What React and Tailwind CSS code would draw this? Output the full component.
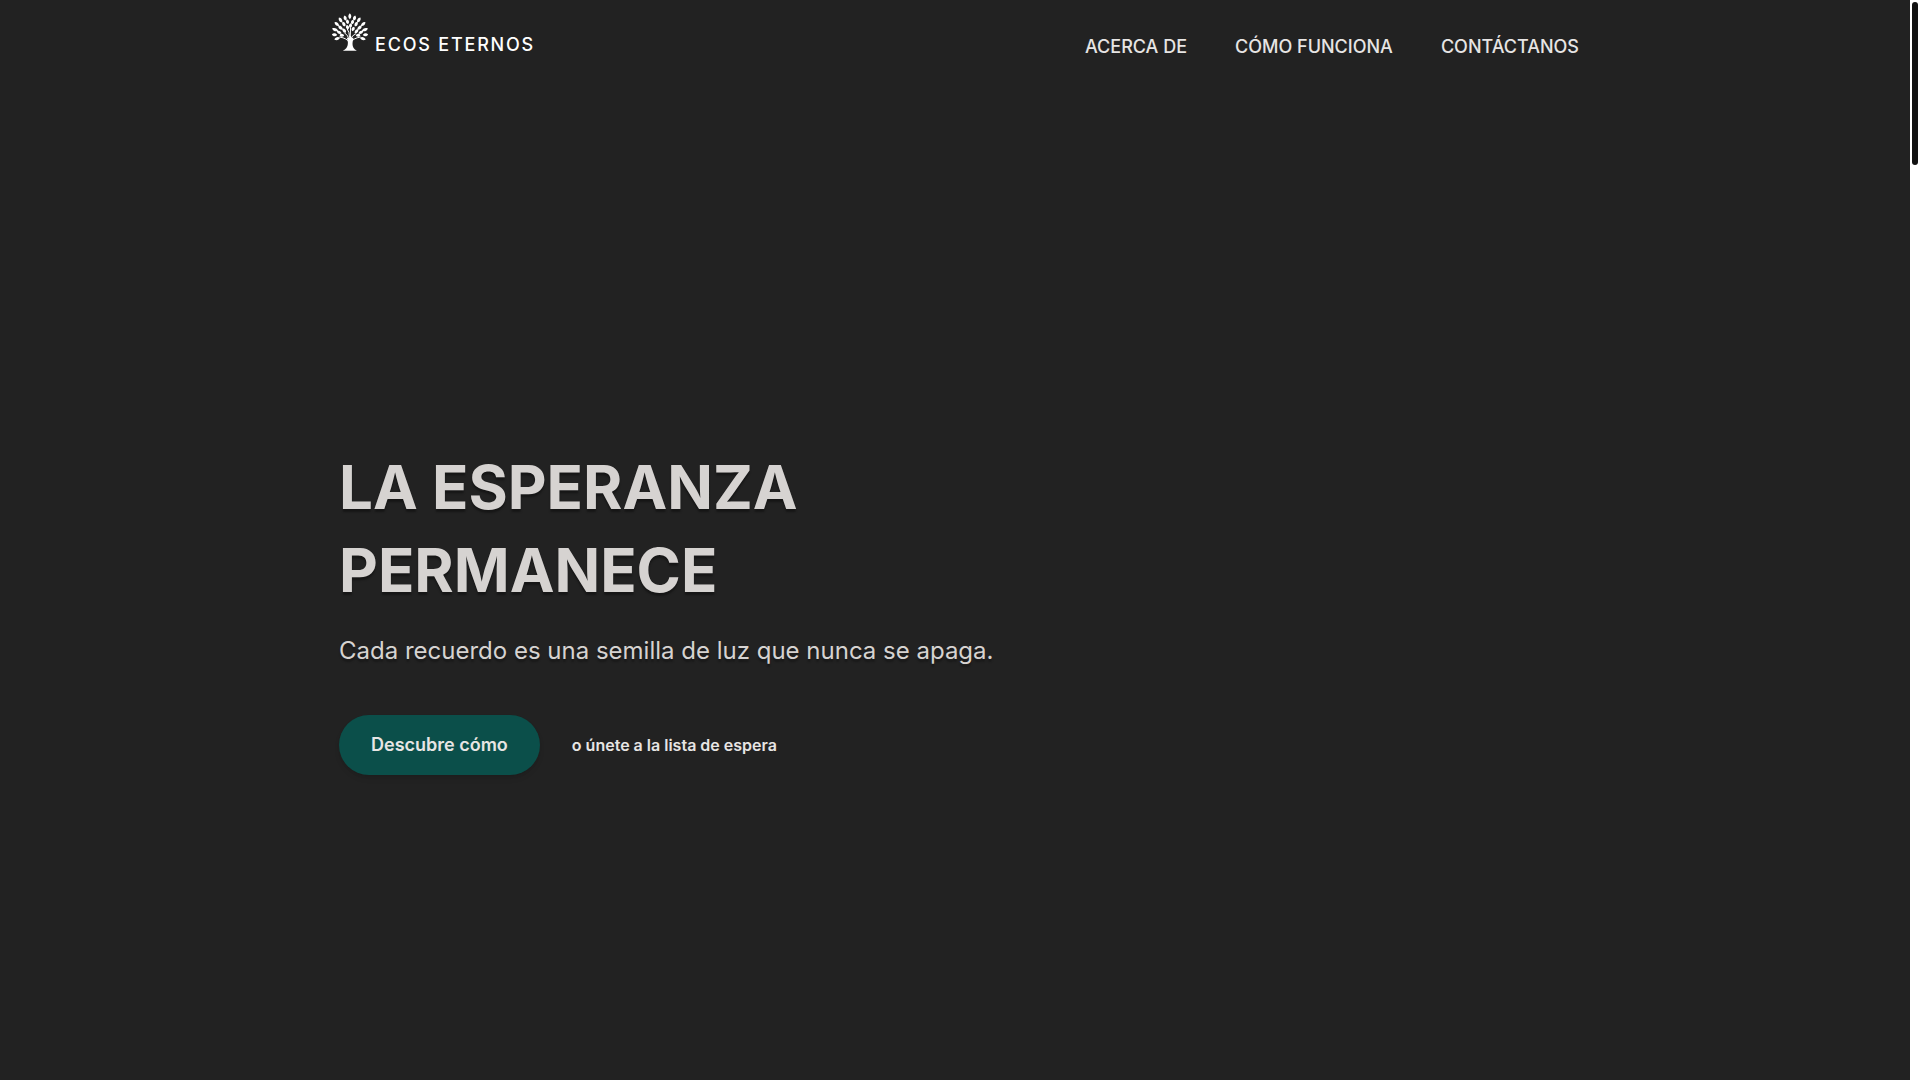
const leaves = [
  [74, 31, 0, 9],
  [60, 36, -14, 8],
  [88, 36, 14, 8],
  [46, 42, -32, 9],
  [101, 42, 32, 9],
  [35, 54, -48, 9],
  [114, 54, 48, 9],
  [30, 71, -68, 10],
  [119, 71, 68, 10],
  [28, 86, -84, 8],
  [121, 86, 84, 8],
  [36, 98, -108, 9],
  [113, 98, 108, 9],
  [67, 47, -12, 7],
  [82, 48, 14, 7],
  [56, 54, -28, 8],
  [93, 54, 28, 8],
  [46, 65, -48, 9],
  [103, 65, 48, 9],
  [42, 79, -62, 8],
  [107, 79, 62, 8],
  [50, 88, -80, 7],
  [99, 88, 80, 7],
  [67, 64, -16, 7],
  [84, 69, 24, 7],
  [57, 74, -40, 8],
  [94, 76, 42, 8],
  [76, 59, 6, 7],
];

function TreeLogo() {
  return (
    <svg viewBox="18 21 113 114" className="h-[38px] w-[38px]" fill="white" aria-hidden="true">
      {leaves.map(([x, y, angle, length]) => (
        <path
          key={`${x}-${y}`}
          d={`M0 ${-length} C6 -4 6 4 0 ${length} C-6 4 -6 -4 0 ${-length}Z`}
          transform={`translate(${x} ${y}) rotate(${angle})`}
        />
      ))}
      <g fill="none" stroke="white" strokeWidth="3" strokeLinecap="round">
        <path d="M70 107 Q66 97 44 93" />
        <path d="M79 107 Q84 97 105 93" />
        <path d="M72 102 Q70 88 58 80" />
        <path d="M75 105 L76 66" />
        <path d="M77 100 Q79 88 92 83" />
        <path d="M73 92 Q73 78 67 70" />
      </g>
      <path d="M65 95 Q73 98 74 90 L77 90 Q78 98 85 95 Q82 104 82 114 Q82 128 95 134 L53 134 Q67 128 68 114 Q69 102 65 95Z" />
    </svg>
  );
}

const links = [
  ["ACERCA DE", "#acerca"],
  ["CÓMO FUNCIONA", "#como"],
  ["CONTÁCTANOS", "#contacto"],
];

export default function App() {
  return (
    <div className="flex h-screen bg-[#222222] font-['Inter',sans-serif] text-stone-200">
      <div className="flex min-w-0 flex-1 flex-col">
        <header className="mx-auto flex w-full max-w-7xl items-start justify-between px-4 pt-[13px]">
          <a href="#inicio" className="flex items-baseline gap-1.5 text-white">
            <TreeLogo />
            <span className="text-lg leading-7 font-medium tracking-widest">ECOS ETERNOS</span>
          </a>
          <nav className="flex gap-12 pt-5 text-lg leading-7 font-medium">
            {links.map(([label, href]) => (
              <a key={href} href={href}>
                {label}
              </a>
            ))}
          </nav>
        </header>
        <main className="mx-auto flex w-full max-w-7xl flex-1 flex-col items-start justify-center px-6 pt-20">
          <h1 className="max-w-xl text-6xl leading-snug font-bold text-stone-300 text-shadow-[0_3px_2px_rgb(0_0_0/0.35)]">
            LA ESPERANZA PERMANECE
          </h1>
          <p className="mt-6 text-2xl text-stone-300 text-shadow-[0_3px_2px_rgb(0_0_0/0.3)]">
            Cada recuerdo es una semilla de luz que nunca se apaga.
          </p>
          <div className="mt-12 flex items-center gap-8">
            <button
              type="button"
              className="rounded-full bg-[#0b4f4a] px-8 py-4 text-lg font-semibold shadow-md"
            >
              Descubre cómo
            </button>
            <a href="#espera" className="font-semibold">
              o únete a la lista de espera
            </a>
          </div>
        </main>
      </div>
      <div className="w-[10px] bg-white p-0.5" aria-hidden="true">
        <div className="h-[15.15%] rounded-full bg-[#111111]" />
      </div>
    </div>
  );
}
